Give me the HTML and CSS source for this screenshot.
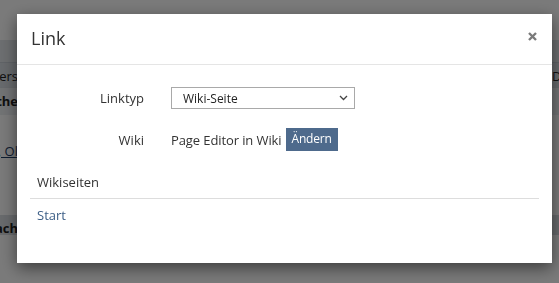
FILE: index.html
```html
<!DOCTYPE html>
<html lang="de">
<head>
	<meta charset="UTF-8">
	<title>Link</title>
<link rel="stylesheet" href="styles.css">
</head>

<body>
<div class="page">
	<div class="band band_head"></div>
	<div class="band band_row"><span class="l">Vers</span><span class="r">D</span></div>
	<div class="band band_row2"><span class="l b">Othe</span></div>
	<div class="plain"><span class="l link">Test, Ol</span></div>
	<div class="band band_foot"><span class="l b">Sach</span></div>
</div>

<div class="overlay">
	<div class="modal">
		<div class="modal_header">
			<h4>Link</h4>
			<svg class="close" width="9" height="9" viewBox="0 0 9 9"><path d="M1 1L8 8M8 1L1 8" stroke="#7b7b7b" stroke-width="2.4"/></svg>
		</div>
		<div class="modal_body">
			<div class="form">
				<label>Linktyp</label>
				<div class="select">
					<span>Wiki-Seite</span>
					<svg width="9" height="6" viewBox="0 0 9 6"><path d="M1 1L4.5 4.5L8 1" fill="none" stroke="#444" stroke-width="1.3"/></svg>
				</div>
				<label>Wiki</label>
				<div class="wiki">
					<span>Page Editor in Wiki</span>
					<a class="btn" href="javascript:;">Ändern</a>
				</div>
			</div>
			<div class="pages">
				<div class="pages_title">Wikiseiten</div>
				<a class="pages_item" href="javascript:;">Start</a>
			</div>
		</div>
	</div>
</div>
</body>
</html>
```

FILE: styles.css
```css
* { margin:0; padding:0; box-sizing:border-box;}
body { font-family:"Open Sans", "Liberation Sans", sans-serif; font-size:13px; color:#333; background:#fff; width:559px; height:283px; overflow:hidden;}

.page { padding-top:40px; font-size:13px;}
.band { height:22px; background:#e2e6ea; position:relative;}
.band_row { height:25px; background:#d8dde3; border-top:1px solid #c8ced6;}
.band_row2 { height:28px; background:#edf0f3; border-top:1px solid #d6dbe1;}
.band_foot { height:20px; background:#d9dde2; margin-top:0;}
.plain { height:100px; position:relative;}
.page span { position:absolute;}
.page .l { right:541px; top:4px; white-space:nowrap; color:#222;}
.page .r { left:552px; top:4px; color:#222;}
.page .b { font-weight:bold;}
.page .link { top:27px; text-decoration:underline; color:#1d3d66;}

.overlay { position:fixed; top:0; left:0; right:0; bottom:0; background:rgba(0,0,0,0.52); padding:14px 0 0 17px;}
.modal { width:535px; height:249px; background:#fff; box-shadow:0 5px 15px rgba(0,0,0,0.5);}

.modal_header { height:51px; border-bottom:1px solid #e5e5e5; padding:0 15px 0 14px; display:flex; align-items:center; justify-content:space-between;}
.modal_header h4 { font-size:18px; font-weight:normal; color:#333; margin-top:-2px;}
.close { margin-top:-6px;}

.modal_body { padding:22px 13px 0 13px;}
.form { display:grid; grid-template-columns:114px 1fr; column-gap:27px; row-gap:19px; align-items:center;}
.form label { text-align:right;}
.select { width:184px; height:22px; border:1px solid #a9a9a9; display:flex; align-items:center; justify-content:space-between; padding:0 6px 0 11px; font-size:12px; color:#222;}
.wiki { display:flex; align-items:center; gap:4px; letter-spacing:-0.1px;}
.btn { display:block; background:#4e6a8c; color:#fff; text-decoration:none; font-size:12px; padding:3px 6px 4px; line-height:16px; letter-spacing:-0.2px;}

.pages { margin-top:22px;}
.pages_title { padding:0 0 7px 7px; border-bottom:1px solid #ddd; width:509px;}
.pages_item { display:block; padding:7px 0 0 7px; color:#3c5e86; text-decoration:none;}
```
